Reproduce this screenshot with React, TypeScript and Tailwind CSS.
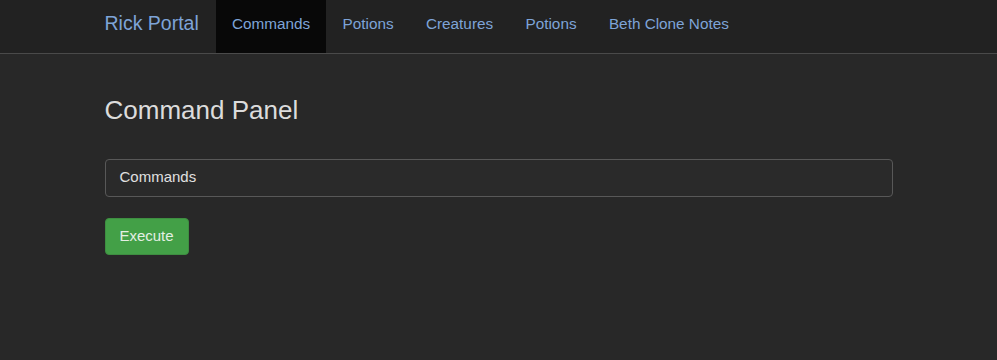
const LINKS = ["Commands", "Potions", "Creatures", "Potions", "Beth Clone Notes"];

export default function App() {
  return (
    <div
      className="min-h-[360px] bg-[#282828] text-[#dddddd]"
      style={{ fontFamily: '"Liberation Sans", Arial, sans-serif' }}
    >
      <nav className="h-[54px] bg-[#222222] border-b border-[#4a4a4a]">
        <div className="w-[788px] mx-auto flex h-[53px]">
          <a className="flex items-center pb-[5px] pr-[17px] text-[19.5px] text-[#7ea4d8]">Rick Portal</a>
          {LINKS.map((l, i) => (
            <a
              key={i}
              className={`flex items-center pb-[5px] px-[16.2px] text-[15.3px] text-[#7ea4d8] ${i === 0 ? "bg-[#080808]" : ""}`}
            >
              {l}
            </a>
          ))}
        </div>
      </nav>
      <main className="w-[788px] mx-auto">
        <h2 className="mt-[42px] text-[26px] leading-[1.1] text-[#dcdcdc]">Command Panel</h2>
        <div className="mt-[34px] h-[38px] rounded-[4px] border border-[#585858] bg-[#2a2a2a] flex items-center px-[14px] text-[15px] text-[#e0e0e0]">
          Commands
        </div>
        <button className="mt-[21px] h-[37px] w-[84px] rounded-[4px] border border-[#3e8e41] bg-[#43a047] text-[15px] text-[#e4efe4]">
          Execute
        </button>
      </main>
    </div>
  );
}
